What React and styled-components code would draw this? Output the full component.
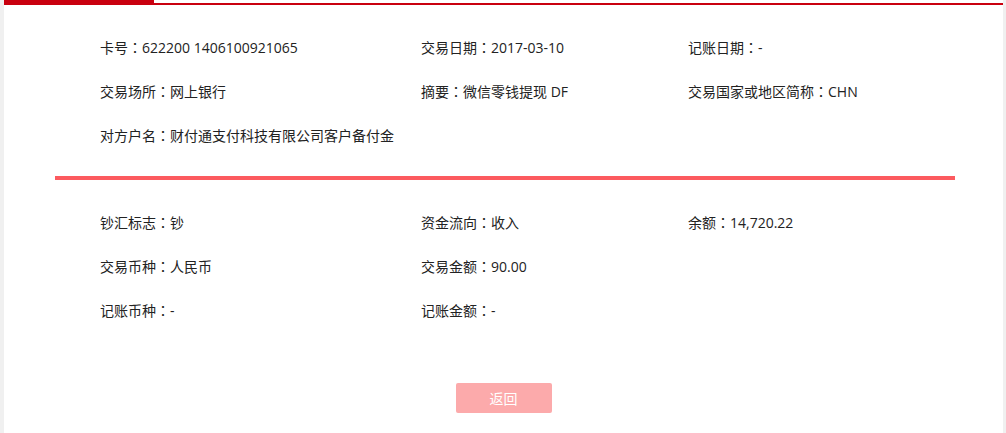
import React from "react";
import styled, { createGlobalStyle } from "styled-components";

const GlobalStyle = createGlobalStyle`
  html, body {
    margin: 0;
    padding: 0;
  }
  body {
    font-family: "Open Sans", "Noto Sans CJK SC", sans-serif;
    background-color: #f0f0f0;
  }
`;

const topFields = [
  ["卡号", "622200 1406100921065"],
  ["交易日期", "2017-03-10"],
  ["记账日期", "-"],
  ["交易场所", "网上银行"],
  ["摘要", "微信零钱提现 DF"],
  ["交易国家或地区简称", "CHN"],
  ["对方户名", "财付通支付科技有限公司客户备付金"],
];

const bottomFields = [
  ["钞汇标志", "钞"],
  ["资金流向", "收入"],
  ["余额", "14,720.22"],
  ["交易币种", "人民币"],
  ["交易金额", "90.00"],
  null,
  ["记账币种", "-"],
  ["记账金额", "-"],
];

function FieldGrid({ fields }) {
  return (
    <Grid>
      {fields.map((f, i) =>
        f ? (
          <Field key={i}>
            {f[0]}
            <Colon>：</Colon>
            {f[1]}
          </Field>
        ) : (
          <Field key={i} />
        )
      )}
    </Grid>
  );
}

function App() {
  return (
    <>
      <GlobalStyle />
      <Page>
        <Card>
          <TabBar>
            <ActiveTab />
            <TabLine />
          </TabBar>
          <Section>
            <FieldGrid fields={topFields} />
          </Section>
          <Divider />
          <Section>
            <FieldGrid fields={bottomFields} />
          </Section>
          <Actions>
            <BackButton>返回</BackButton>
          </Actions>
        </Card>
      </Page>
    </>
  );
}

export default App;

const Page = styled.div`
  min-height: 100vh;
  padding: 0 3px 0 4px;
  box-sizing: border-box;
  display: flex;
`;
const Card = styled.div`
  flex: 1;
  background-color: #ffffff;
  display: flex;
  flex-direction: column;
`;
const TabBar = styled.div`
  display: flex;
  height: 5px;
`;
const ActiveTab = styled.div`
  width: 150px;
  background-color: #c9000f;
`;
const TabLine = styled.div`
  flex: 1;
  border-bottom: 2px solid #c9000f;
`;
const Section = styled.div`
  padding: 20px 0 0 96px;
`;
const Grid = styled.div`
  display: grid;
  grid-template-columns: 321px 267px 1fr;
`;
const Field = styled.div`
  font-size: 14px;
  line-height: 44px;
  height: 44px;
  color: #222222;
  white-space: nowrap;
`;
const Colon = styled.span`
  font-family: "Noto Sans CJK TC", sans-serif;
`;
const Divider = styled.div`
  margin: 19px 0 0 51px;
  width: 900px;
  height: 4px;
  background-color: #fc5a5f;
`;
const Actions = styled.div`
  display: flex;
  justify-content: center;
  margin-top: 51px;
  padding-bottom: 20px;
`;
const BackButton = styled.button`
  width: 96px;
  height: 30px;
  border: none;
  border-radius: 2px;
  background-color: #fcaaab;
  color: #ffffff;
  font-family: "Noto Sans CJK SC", "Noto Sans", sans-serif;
  font-size: 14px;
  cursor: pointer;
  padding: 0;
`;
